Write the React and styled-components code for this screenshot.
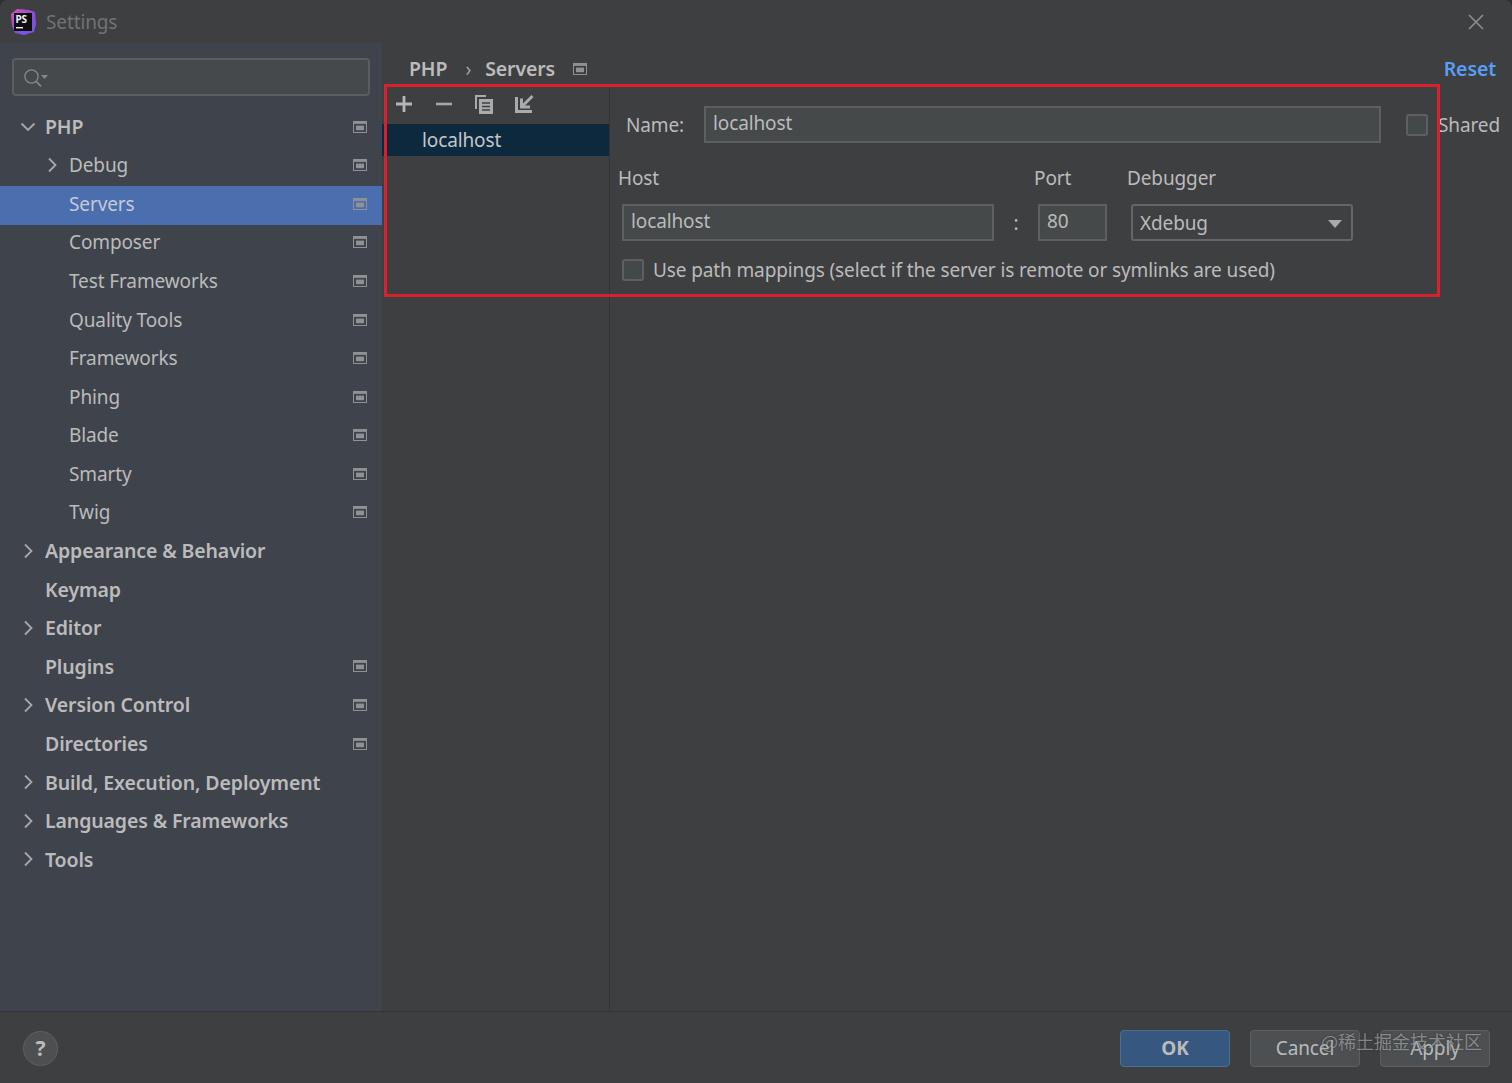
import React from "react";
import styled, { createGlobalStyle } from "styled-components";

const GlobalStyle = createGlobalStyle`
  html, body {
    margin: 0;
    padding: 0;
    background: #2f3032;
  }
  * {
    box-sizing: border-box;
  }
`;

const tree = [
  { label: "PHP", level: 0, arrow: "open", bold: true, pin: true },
  { label: "Debug", level: 1, arrow: "closed", pin: true },
  { label: "Servers", level: 1, selected: true, pin: true },
  { label: "Composer", level: 1, pin: true },
  { label: "Test Frameworks", level: 1, pin: true },
  { label: "Quality Tools", level: 1, pin: true },
  { label: "Frameworks", level: 1, pin: true },
  { label: "Phing", level: 1, pin: true },
  { label: "Blade", level: 1, pin: true },
  { label: "Smarty", level: 1, pin: true },
  { label: "Twig", level: 1, pin: true },
  { label: "Appearance & Behavior", level: 0, arrow: "closed", bold: true },
  { label: "Keymap", level: 0, bold: true },
  { label: "Editor", level: 0, arrow: "closed", bold: true },
  { label: "Plugins", level: 0, bold: true, pin: true },
  { label: "Version Control", level: 0, arrow: "closed", bold: true, pin: true },
  { label: "Directories", level: 0, bold: true, pin: true },
  { label: "Build, Execution, Deployment", level: 0, arrow: "closed", bold: true },
  { label: "Languages & Frameworks", level: 0, arrow: "closed", bold: true },
  { label: "Tools", level: 0, arrow: "closed", bold: true },
];

const PsLogo = () => (
  <svg width="28" height="28" viewBox="0 0 28 28">
    <defs>
      <linearGradient id="psGrad" x1="0" y1="0" x2="1" y2="1">
        <stop offset="0" stopColor="#e84fb0" />
        <stop offset="0.5" stopColor="#8a4fe0" />
        <stop offset="1" stopColor="#6b57e8" />
      </linearGradient>
    </defs>
    <path d="M2 6 L8 1 L20 2 L26 4 L27 16 L25 24 L15 27 L6 25 L3 18 Z" fill="url(#psGrad)" />
    <rect x="5" y="5" width="18" height="18" fill="#0d0d10" />
    <text x="6.5" y="15" fontFamily="'Noto Sans', sans-serif" fontSize="10" fontWeight="700" fill="#f2f2f2">
      PS
    </text>
    <rect x="7" y="19" width="7" height="1.4" fill="#f2f2f2" />
  </svg>
);

const CloseIcon = () => (
  <svg width="16" height="16" viewBox="0 0 16 16">
    <path d="M1 1 L15 15 M15 1 L1 15" stroke="#8c8e90" strokeWidth="1.6" fill="none" />
  </svg>
);

const SearchIcon = () => (
  <svg width="28" height="22" viewBox="0 0 28 22">
    <circle cx="9.5" cy="9.5" r="6.6" stroke="#85888a" strokeWidth="1.3" fill="none" />
    <path d="M14.2 14.4 L19 19.4" stroke="#85888a" strokeWidth="1.6" fill="none" />
    <path d="M19 8 L26 8 L22.5 12 Z" fill="#85888a" />
  </svg>
);

const Chevron = ({ open }) => (
  <svg width="16" height="16" viewBox="0 0 16 16">
    <path
      d={open ? "M1.5 4.5 L8 11 L14.5 4.5" : "M5 1.5 L11.5 8 L5 14.5"}
      stroke="#a6a8aa"
      strokeWidth="1.8"
      fill="none"
    />
  </svg>
);

const PinIcon = () => (
  <svg width="14" height="12" viewBox="0 0 14 12">
    <rect x="0.5" y="0.5" width="13" height="11" fill="none" stroke="#8f9195" />
    <rect x="0.5" y="0.5" width="13" height="2.4" fill="#8f9195" />
    <rect x="3" y="4.6" width="8" height="4.6" fill="#8f9195" />
  </svg>
);

const PlusIcon = () => (
  <svg width="18" height="18" viewBox="0 0 18 18">
    <path d="M9 1 V17 M1 9 H17" stroke="#b4b6b8" strokeWidth="2.8" fill="none" />
  </svg>
);

const MinusIcon = () => (
  <svg width="18" height="18" viewBox="0 0 18 18">
    <path d="M1 9 H17" stroke="#a6a8aa" strokeWidth="2.6" fill="none" />
  </svg>
);

const CopyIcon = () => (
  <svg width="20" height="21" viewBox="0 0 20 21">
    <path d="M1 1 H12 V3 H3 V15 H1 Z" fill="#a9abad" />
    <path d="M5 5 H19 V20 H5 Z" fill="#a9abad" />
    <path d="M8 9 H16 M8 12.5 H16 M8 16 H16" stroke="#3f4042" strokeWidth="1.4" />
  </svg>
);

const ImportIcon = () => (
  <svg width="20" height="20" viewBox="0 0 20 20">
    <path d="M1 3 H4 V16 H18 V19 H1 Z" fill="#a9abad" />
    <path d="M18.5 2 L9 11.5 M7.5 4.5 V13 H16" stroke="#a9abad" strokeWidth="3" fill="none" />
  </svg>
);

const App = () => {
  return (
    <Dialog>
      <GlobalStyle />
      <TitleBar>
        <TitleLeft>
          <PsLogo />
          <TitleText>Settings</TitleText>
        </TitleLeft>
        <CloseIcon />
      </TitleBar>
      <Body>
        <Sidebar>
          <SearchBox>
            <SearchIcon />
          </SearchBox>
          <Tree>
            {tree.map((item) => (
              <TreeRow key={item.label} $level={item.level} $selected={item.selected}>
                <ArrowSlot>
                  {item.arrow && <Chevron open={item.arrow === "open"} />}
                </ArrowSlot>
                <TreeLabel $bold={item.bold} $selected={item.selected}>
                  {item.label}
                </TreeLabel>
                {item.pin && (
                  <PinSlot>
                    <PinIcon />
                  </PinSlot>
                )}
              </TreeRow>
            ))}
          </Tree>
        </Sidebar>
        <Main>
          <Breadcrumb>
            <Crumbs>
              <Crumb>PHP</Crumb>
              <CrumbSep>›</CrumbSep>
              <Crumb>Servers</Crumb>
              <PinIcon />
            </Crumbs>
            <ResetLink>Reset</ResetLink>
          </Breadcrumb>
          <Content>
            <ListPane>
              <ListToolbar>
                <ToolSlot><PlusIcon /></ToolSlot>
                <ToolSlot><MinusIcon /></ToolSlot>
                <ToolSlot><CopyIcon /></ToolSlot>
                <ToolSlot><ImportIcon /></ToolSlot>
              </ListToolbar>
              <ListItem>localhost</ListItem>
            </ListPane>
            <FormPane>
              <NameRow>
                <NameLabel>Name:</NameLabel>
                <Field $width="677px">localhost</Field>
                <SharedCheck />
                <SharedLabel>Shared</SharedLabel>
              </NameRow>
              <HostGrid>
                <FieldLabel>Host</FieldLabel>
                <span />
                <FieldLabel>Port</FieldLabel>
                <FieldLabel>Debugger</FieldLabel>
                <Field $width="372px">localhost</Field>
                <Colon>:</Colon>
                <Field $width="69px">80</Field>
                <Select>
                  Xdebug
                  <SelectArrow />
                </Select>
              </HostGrid>
              <MappingRow>
                <Checkbox />
                <MappingLabel>
                  Use path mappings (select if the server is remote or symlinks are used)
                </MappingLabel>
              </MappingRow>
            </FormPane>
          </Content>
        </Main>
      </Body>
      <Footer>
        <HelpButton>?</HelpButton>
        <Buttons>
          <Button $primary>OK</Button>
          <Button>Cancel</Button>
          <Button>Apply</Button>
        </Buttons>
      </Footer>
      <RedBox />
      <Watermark>@稀土掘金技术社区</Watermark>
    </Dialog>
  );
};

const Dialog = styled.div`
  position: relative;
  width: 1512px;
  height: 1083px;
  display: flex;
  flex-direction: column;
  overflow: hidden;
  background: #3e3f41;
  border-radius: 8px 8px 0 0;
  color: #bbbbbb;
  font-family: "Noto Sans", "Open Sans", sans-serif;
  font-size: 19px;
  letter-spacing: -0.12px;
`;

const TitleBar = styled.div`
  height: 43px;
  flex-shrink: 0;
  display: flex;
  align-items: center;
  justify-content: space-between;
  padding: 0 28px 0 9px;
`;

const TitleLeft = styled.div`
  display: flex;
  align-items: center;
  gap: 9px;
`;

const TitleText = styled.span`
  color: #717274;
`;

const Body = styled.div`
  flex: 1;
  min-height: 0;
  display: flex;
  border-bottom: 1px solid #333436;
`;

const Sidebar = styled.div`
  width: 382px;
  flex-shrink: 0;
  background: #3f434c;
  padding-top: 15px;
`;

const SearchBox = styled.div`
  width: 358px;
  height: 38px;
  margin-left: 12px;
  margin-bottom: 13px;
  padding: 7px 0 0 8px;
  background: #45494b;
  border: 2px solid #5b5e60;
  border-radius: 4px;
  display: flex;
`;

const Tree = styled.div`
  display: flex;
  flex-direction: column;
`;

const TreeRow = styled.div`
  height: 38.55px;
  display: flex;
  align-items: center;
  padding-left: ${(p) => (p.$level === 1 ? "44px" : "20px")};
  padding-right: 15px;
  padding-bottom: 3px;
  background: ${(p) => (p.$selected ? "#4b6eaf" : "transparent")};
`;

const ArrowSlot = styled.div`
  width: 25px;
  flex-shrink: 0;
  display: flex;
  align-items: center;
`;

const TreeLabel = styled.span`
  flex: 1;
  font-weight: ${(p) => (p.$bold ? 600 : 400)};
  font-size: ${(p) => (p.$bold ? "19.5px" : "19px")};
  color: ${(p) => (p.$selected ? "#c3cad6" : "#bbbbbb")};
  white-space: nowrap;
`;

const PinSlot = styled.div`
  display: flex;
  align-items: center;
`;

const Main = styled.div`
  flex: 1;
  min-width: 0;
  display: flex;
  flex-direction: column;
`;

const Breadcrumb = styled.div`
  height: 45px;
  flex-shrink: 0;
  display: flex;
  align-items: center;
  justify-content: space-between;
  padding: 6px 16px 0 27px;
`;

const Crumbs = styled.div`
  display: flex;
  align-items: center;
`;

const Crumb = styled.span`
  font-weight: 600;
  font-size: 19.5px;
  color: #bbbbbb;
  margin-right: 18px;
`;

const CrumbSep = styled.span`
  color: #a0a2a4;
  margin-right: 14px;
`;

const ResetLink = styled.span`
  color: #589df6;
  font-weight: 600;
  font-size: 19.5px;
`;

const Content = styled.div`
  flex: 1;
  min-height: 0;
  display: flex;
`;

const ListPane = styled.div`
  width: 228px;
  flex-shrink: 0;
  border-right: 1px solid #323335;
`;

const ListToolbar = styled.div`
  height: 36px;
  display: flex;
  align-items: center;
  padding: 0 0 4px 2px;
`;

const ToolSlot = styled.div`
  width: 40px;
  display: flex;
  align-items: center;
  justify-content: center;
`;

const ListItem = styled.div`
  height: 32px;
  display: flex;
  align-items: center;
  padding-left: 40px;
  background: #0d293e;
  color: #c4c6c8;
`;

const FormPane = styled.div`
  flex: 1;
  min-width: 0;
  padding: 18px 0 0 8px;
`;

const NameRow = styled.div`
  display: flex;
  align-items: center;
  height: 37px;
  padding-left: 8px;
`;

const NameLabel = styled.span`
  width: 78px;
  flex-shrink: 0;
`;

const Field = styled.div`
  width: ${(p) => p.$width};
  height: 37px;
  flex-shrink: 0;
  display: flex;
  align-items: center;
  padding: 0 0 3px 7px;
  background: #45494a;
  border: 2px solid #5e6060;
  color: #bbbbbb;
`;

const Checkbox = styled.div`
  width: 22px;
  height: 22px;
  flex-shrink: 0;
  background: #43494a;
  border: 2px solid #5e6060;
  border-radius: 3px;
`;

const SharedCheck = styled(Checkbox)`
  margin-left: 25px;
`;

const SharedLabel = styled.span`
  margin-left: 10px;
  white-space: nowrap;
`;

const HostGrid = styled.div`
  display: grid;
  grid-template-columns: 376px 40px 93px 222px;
  grid-template-rows: 40px 37px;
  row-gap: 6px;
  margin-top: 15px;
  align-items: center;
  justify-items: start;

  ${Field} {
    margin-left: 4px;
  }
`;

const FieldLabel = styled.span`
  white-space: nowrap;
`;

const Colon = styled.span`
  justify-self: center;
  padding-left: 4px;
`;

const Select = styled.div`
  position: relative;
  width: 222px;
  height: 37px;
  margin-left: 4px;
  display: flex;
  align-items: center;
  padding: 0 0 0 7px;
  background: #3e4042;
  border: 2px solid #646668;
  border-radius: 3px;
`;

const SelectArrow = styled.div`
  position: absolute;
  right: 9px;
  top: 14px;
  width: 0;
  height: 0;
  border-left: 7px solid transparent;
  border-right: 7px solid transparent;
  border-top: 8px solid #a8aaac;
`;

const MappingRow = styled.div`
  display: flex;
  align-items: center;
  gap: 9px;
  margin-top: 16px;
  margin-left: 4px;
`;

const MappingLabel = styled.span`
  white-space: nowrap;
`;

const Footer = styled.div`
  height: 71px;
  flex-shrink: 0;
  display: flex;
  align-items: center;
  justify-content: space-between;
  padding: 1px 22px 0 23px;
`;

const HelpButton = styled.div`
  width: 35px;
  height: 35px;
  display: flex;
  align-items: center;
  justify-content: center;
  border-radius: 50%;
  background: #4c5052;
  border: 1px solid #5e6060;
  font-weight: 700;
  font-size: 21px;
  color: #bbbbbb;
`;

const Buttons = styled.div`
  display: flex;
  gap: 20px;
`;

const Button = styled.div`
  width: 110px;
  height: 37px;
  display: flex;
  align-items: center;
  justify-content: center;
  border-radius: 4px;
  background: ${(p) => (p.$primary ? "#365880" : "#4c5052")};
  border: 1px solid ${(p) => (p.$primary ? "#4c708c" : "#5e6060")};
  color: #bbbbbb;
  font-weight: ${(p) => (p.$primary ? 700 : 400)};
`;

const RedBox = styled.div`
  position: absolute;
  left: 384px;
  top: 84px;
  width: 1056px;
  height: 213px;
  border: 3px solid #d9202c;
  pointer-events: none;
`;

const Watermark = styled.div`
  position: absolute;
  left: 1321px;
  top: 1028px;
  font-family: "Noto Sans CJK SC", sans-serif;
  font-size: 18px;
  letter-spacing: 0;
  color: rgba(190, 190, 190, 0.6);
  text-shadow: 0 0 2px rgba(0, 0, 0, 0.35);
  white-space: nowrap;
`;

export default App;
